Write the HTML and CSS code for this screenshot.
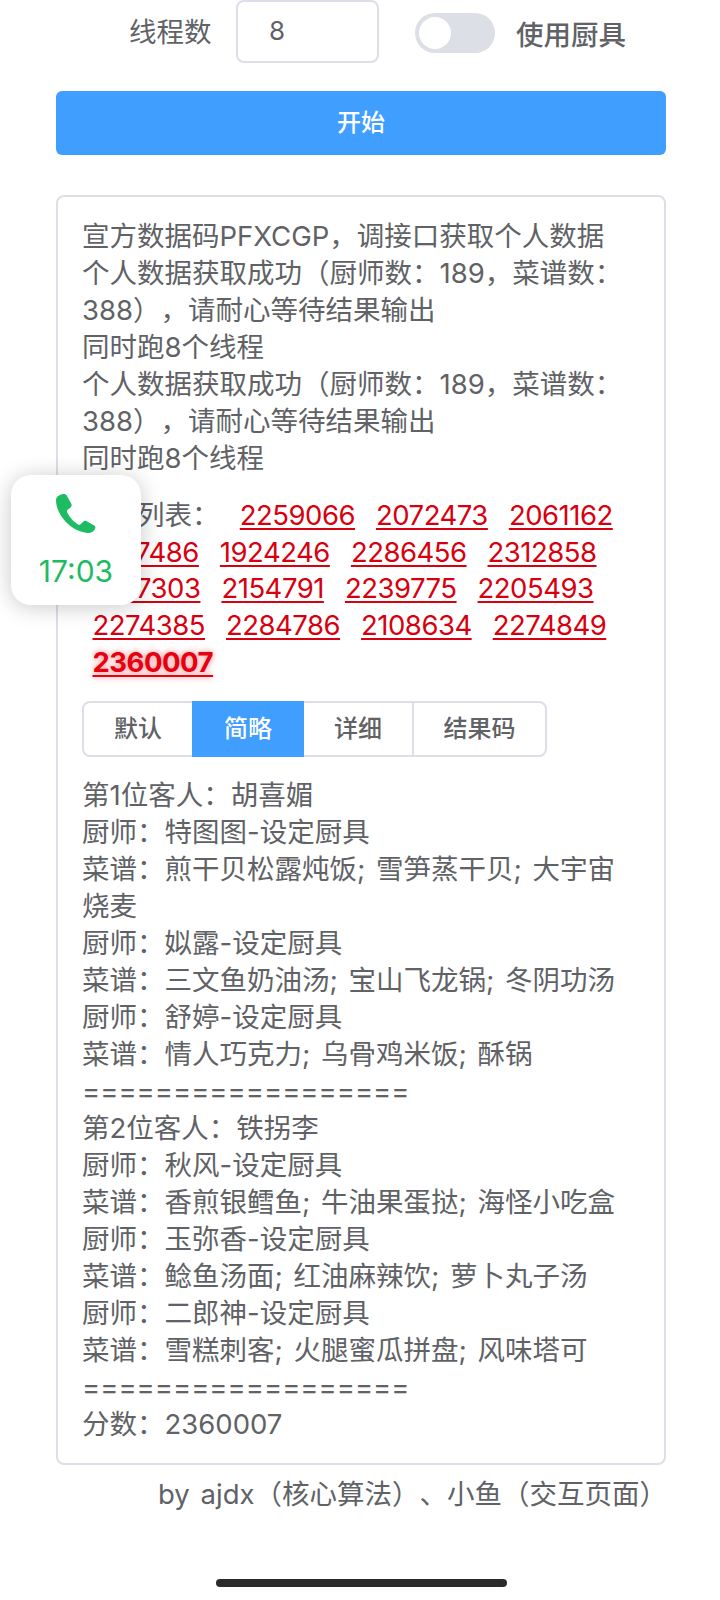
FILE: index.html
```html
<!DOCTYPE html>
<html>
	<head>
		<meta charset="UTF-8" />
		<meta name="viewport" content="width=device-width" />
		<title>计算器</title>
		<link rel="stylesheet" href="styles.css">
	</head>
	<body>
		<div class="top-row">
			<span class="top-label">线程数</span>
			<div class="num-input">8</div>
			<div class="switch"><div class="switch-thumb"></div></div>
			<span class="switch-label">使用厨具</span>
		</div>

		<div class="start-btn">开始</div>

		<div class="card">
			<div class="log">宣方数据码PFXCGP，调接口获取个人数据<br>个人数据获取成功（厨师数：189，菜谱数：388），请耐心等待结果输出<br>同时跑8个线程<br>个人数据获取成功（厨师数：189，菜谱数：388），请耐心等待结果输出<br>同时跑8个线程</div>

			<div class="scores"><span class="scores-label">分数列表： </span><a href="#">2259066</a><a href="#">2072473</a><a href="#">2061162</a><a href="#">2177486</a><a href="#">1924246</a><a href="#">2286456</a><a href="#">2312858</a><a href="#">2167303</a><a href="#">2154791</a><a href="#">2239775</a><a href="#">2205493</a><a href="#">2274385</a><a href="#">2284786</a><a href="#">2108634</a><a href="#">2274849</a><a href="#" class="best">2360007</a></div>

			<div class="tabs">
				<div class="tab tab-a">默认</div>
				<div class="tab tab-b active">简略</div>
				<div class="tab tab-c">详细</div>
				<div class="tab tab-d">结果码</div>
			</div>

			<div class="log">第1位客人：胡喜媚<br>厨师：特图图-设定厨具<br>菜谱：煎干贝松露炖饭; 雪笋蒸干贝; 大宇宙烧麦<br>厨师：姒露-设定厨具<br>菜谱：三文鱼奶油汤; 宝山飞龙锅; 冬阴功汤<br>厨师：舒婷-设定厨具<br>菜谱：情人巧克力; 乌骨鸡米饭; 酥锅<br>==================<br>第2位客人：铁拐李<br>厨师：秋风-设定厨具<br>菜谱：香煎银鳕鱼; 牛油果蛋挞; 海怪小吃盒<br>厨师：玉弥香-设定厨具<br>菜谱：鲶鱼汤面; 红油麻辣饮; 萝卜丸子汤<br>厨师：二郎神-设定厨具<br>菜谱：雪糕刺客; 火腿蜜瓜拼盘; 风味塔可<br>==================<br>分数：2360007</div>
		</div>

		<div class="credits">by ajdx（核心算法）、小鱼（交互页面）</div>

		<div class="home-bar"></div>

		<!-- floating call bubble -->
		<div class="call-bubble">
			<svg class="call-icon" viewBox="0 0 40 40" width="40" height="40">
				<path d="M3 1.500c-1.600.8-2.900 2.400-3 4.300C0 13 3 20 9 27c6 6.500 13 10.500 22 12 3.500.5 6.500-1.200 8-4 .7-1.400.5-2.600-.8-3.400l-7.500-4.300c-1.300-.7-2.500-.6-3.500.4l-2.600 2.500c-.8.6-1.700.7-2.600.2-2.700-1.600-4.800-3.500-6.800-5.800-1.700-2.100-3-4.100-4.100-6.600-.3-.8-.2-1.600.5-2.200l2.900-2.300c1.100-.9 1.400-2.200.9-3.500L11.300 2.500C10.600.6 9.100 0 7.300 0 5.900 0 4.300.8 3 1.500z"/>
			</svg>
			<span class="call-time">17:03</span>
		</div>
	</body>
</html>
```

FILE: styles.css
```css
* {
    box-sizing: border-box;
}

body {
    margin: 0;
    width: 720px;
    height: 1600px;
    overflow: hidden;
    position: relative;
    background-color: #fff;
    color: #606266;
    font-family: Inter, "Noto Sans CJK SC", sans-serif;
    font-size: 27.5px;
    text-spacing-trim: space-all;
}

.top-row {
    display: flex;
    align-items: center;
    height: 62px;
    padding-left: 129px;
}

.top-label {
    width: 107px;
    margin-top: -3px;
}

.num-input {
    width: 143px;
    height: 63px;
    line-height: 57px;
    padding-left: 31px;
    border: 2px solid #dcdfe6;
    border-radius: 8px;
    font-size: 26px;
}

.switch {
    width: 80px;
    height: 40px;
    margin: 4px 21px 0 36px;
    padding: 4px;
    background-color: #dcdfe6;
    border-radius: 20px;
}

.switch-thumb {
    width: 32px;
    height: 32px;
    background-color: #fff;
    border-radius: 50%;
}

.switch-label {
    margin-top: 3px;
    font-weight: 500;
    color: #606266;
}

.start-btn {
    width: 610px;
    height: 64px;
    margin: 29px 0 0 56px;
    background-color: #409eff;
    color: #fff;
    border-radius: 6px;
    text-align: center;
    line-height: 64px;
    font-size: 24px;
    font-weight: 500;
}

.card {
    width: 610px;
    height: 1270px;
    margin: 40px 0 0 56px;
    padding: 21px 32px 0 24px;
    border: 2px solid #dcdfe6;
    border-radius: 8px;
    line-height: 37px;
}

.log {
    word-spacing: 3px;
}

.scores {
    margin-top: 20px;
    line-height: 36.7px;
}

.scores-label {
    margin-right: 2px;
}

.scores a {
    display: inline-block;
    margin: 0 10.5px;
    color: #d7000f;
    letter-spacing: -0.5px;
    text-decoration: underline;
    text-decoration-thickness: 2px;
    text-underline-offset: 3px;
}

.scores a.best {
    color: #e60012;
    font-weight: bold;
    text-shadow: 0 0 6px rgba(255, 0, 0, 0.5);
}

.tabs {
    display: flex;
    width: 465px;
    height: 56px;
    margin: 20px 0 20px;
    border: 2px solid #dcdfe6;
    border-radius: 8px;
    font-size: 24px;
    font-weight: 500;
}

.tab {
    margin: -2px 0;
    line-height: 56px;
    text-align: center;
}

.tab-a { width: 108px; }
.tab-b { width: 112px; }
.tab-c { width: 110px; border-right: 2px solid #dcdfe6; }
.tab-d { flex: 1; }

.tab.active {
    background-color: #409eff;
    color: #fff;
}

.credits {
    margin-top: 11px;
    padding-right: 53px;
    text-align: right;
    line-height: 37px;
    word-spacing: 3px;
}

.home-bar {
    width: 291px;
    height: 8px;
    margin: 66px 0 0 216px;
    background-color: #2b2b2b;
    border-radius: 4px;
}

.call-bubble {
    position: absolute;
    top: 475px;
    left: 11px;
    width: 130px;
    height: 130px;
    display: flex;
    flex-direction: column;
    align-items: center;
    padding-top: 19px;
    background-color: #fff;
    border-radius: 20px;
    box-shadow: 0 2px 22px rgba(0, 0, 0, 0.22);
}

.call-icon {
    fill: #1dbb62;
}

.call-time {
    margin-top: 19px;
    color: #1dbb62;
    font-size: 30px;
    line-height: 36px;
}
```
